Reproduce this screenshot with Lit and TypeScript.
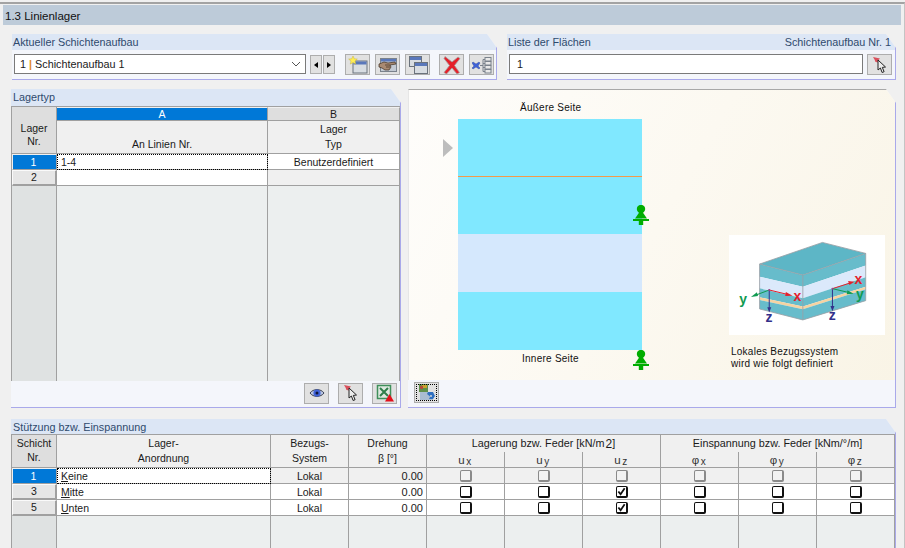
import { LitElement, html, css, svg } from "lit";
import { customElement } from "lit/decorators.js";

const winIcon = (x: number, y: number, w: number, h: number) => svg`
  <rect x="${x}" y="${y}" width="${w}" height="${h}" fill="#d8dde2" stroke="#6a727c" stroke-width="1"/>
  <rect x="${x + 0.5}" y="${y + 0.5}" width="${w - 1}" height="3" fill="#5a78bb"/>`;

const icons: Record<string, unknown> = {
  star: svg`<svg viewBox="0 0 20 18" width="20" height="18">${winIcon(5, 5, 14, 12)}
    <path d="M5 0l1.300 2.800 3 .3-2.300 2 .7 3L5 6.600 2.300 8.100l.7-3-2.300-2 3-.3z" fill="#ffee55" stroke="#c9b53a" stroke-width=".5"/></svg>`,
  hand: svg`<svg viewBox="0 0 20 18" width="20" height="18">
    <rect x="2.500" y="2.500" width="16" height="13" fill="#c3cad3" stroke="#7a828c"/>
    <rect x="3" y="3" width="15" height="2.500" fill="#5a78bb"/>
    <path d="M1 8l5-2 4 1 7-1 1 2-6 1 1 2-2 3-4 0-3-2-3-1z" fill="#a98a72" stroke="#3c2c20" stroke-width=".7"/>
    <path d="M7 9l5 0M8 11l4 0" stroke="#3c2c20" stroke-width=".7"/></svg>`,
  copy: svg`<svg viewBox="0 0 20 18" width="20" height="18">${winIcon(1.5, 0.5, 12, 10)}${winIcon(6.5, 6.5, 13, 11)}</svg>`,
  del: svg`<svg viewBox="0 0 20 18" width="20" height="18">
    <path d="M3 .5l7 5.500 6-5 2 1.500-5.500 7 5 7-2.500 1.500-5-6-5.500 6-2.500-1.500 5.500-7-5.500-7z" fill="#e5202a" stroke="#a8a0a0" stroke-width=".8"/></svg>`,
  tree: svg`<svg viewBox="0 0 20 18" width="20" height="18">
    <path d="M1 6l3 2 3-2 1 1-2 3 2 2-1 1-3-2-3 2-1-1 2-2-2-3z" fill="#3f62d8" stroke="#26408f" stroke-width=".4"/>
    <path d="M8 9.500h3M11 3.500v12M11 3.500h2M11 7.500h2M11 11.500h2M11 15.500h2" stroke="#7a828c" fill="none"/>
    <rect x="13" y="1.500" width="6" height="3.500" fill="#e8e8e8" stroke="#7a828c"/>
    <rect x="13" y="5.500" width="6" height="3.500" fill="#e8e8e8" stroke="#7a828c"/>
    <rect x="13" y="9.500" width="6" height="3.500" fill="#e8e8e8" stroke="#7a828c"/>
    <rect x="13" y="13.500" width="6" height="3.500" fill="#e8e8e8" stroke="#7a828c"/></svg>`,
  pick: svg`<svg viewBox="0 0 20 18" width="20" height="18">
    <path d="M3 1l7 1.500-2.500 2.500 1 1.500-3-.5-1-2.500z" fill="#d9505c"/>
    <path d="M8 4l0 10 2.400-2 1.700 4.500 2-.8-1.800-4.300 3.200-.4z" fill="#ececec" stroke="#222" stroke-width="1"/></svg>`,
  eye: svg`<svg viewBox="0 0 20 18" width="20" height="18">
    <path d="M3 9c3-4.500 11-4.500 14 0-3 4.500-11 4.500-14 0z" fill="#b8c4e0" stroke="#3a4156"/>
    <circle cx="10" cy="9" r="3.600" fill="#3f62d8"/><circle cx="10" cy="9" r="1.500" fill="#10163a"/></svg>`,
  excel: svg`<svg viewBox="0 0 20 18" width="20" height="18">
    <rect x="2.500" y="1.500" width="13" height="13" fill="#dfe9e0" stroke="#3f8f5a" stroke-width="1.500"/>
    <path d="M5 4l8 8M13 4l-8 8" stroke="#2f7f4a" stroke-width="2"/>
    <path d="M14.500 10l4.500 7.500h-9z" fill="#e3101c"/></svg>`,
  view: svg`<svg viewBox="0 0 20 18" width="20" height="18">
    <rect x="2" y="1" width="9" height="8" fill="#5f8f4a"/><rect x="5" y="2" width="5" height="3" fill="#c9a12e"/>
    <rect x="3" y="3" width="3" height="3" fill="#b34a3a"/>
    <rect x="3" y="9" width="13" height="8" fill="#a9bcd2"/>
    <path d="M11 9l5 0 2 4-2 3-4 0 1-2 2 0 0-2-2 0 0 1.500-3-2.500z" fill="#2f6fc0"/></svg>`,
};

const support = html`<svg viewBox="0 0 18 20" width="18" height="20">
  <circle cx="9" cy="4" r="4.200" fill="#00ad00"/>
  <path d="M7.500 7h3L15 13.500H3z" fill="#00ad00"/>
  <rect x="1" y="14" width="16" height="2" fill="#00ad00"/>
  <rect x="6.800" y="15" width="4.400" height="5" fill="#00ad00"/>
</svg>`;

const box = svg`<svg viewBox="326 135 469 300" width="156" height="100">
  <path d="M418 222L607 157L737 190L548 255Z" fill="#5db6c6"/>
  <path d="M418 222L548 255V290L418 260Z M548 255L737 190V226L548 290Z" fill="#67bccb"/>
  <path d="M418 260L548 290V325L418 295Z M548 290L737 226V262L548 325Z" fill="#dbe9fb"/>
  <path d="M418 295L548 325V350L418 322Z M548 325L737 262V290L548 350Z" fill="#67bccb"/>
  <path d="M418 322L548 350V358L418 330Z M548 350L737 290V298L548 358Z" fill="#f6d3a2"/>
  <path d="M418 330L548 358V390L418 357Z M548 358L737 298V332L548 390Z" fill="#67bccb"/>
  <path d="M418 222L607 157L737 190V332L548 390L418 357ZM418 222L548 255L737 190M548 255V390" fill="none" stroke="#9a9fa5" stroke-width="2.500"/>
  <path d="M447 300L505 314" stroke="#e3202c" stroke-width="3"/><path d="M517 317L497 306L495 318Z" fill="#e3202c"/>
  <path d="M447 300L405 316" stroke="#109a50" stroke-width="3"/><path d="M392 321L410 307L413 318Z" fill="#109a50"/>
  <path d="M447 300V355" stroke="#33308a" stroke-width="3"/><path d="M447 368L441 352H453Z" fill="#33308a"/>
  <path d="M637 296L690 279" stroke="#e3202c" stroke-width="3"/><path d="M703 275L684 273L688 285Z" fill="#e3202c"/>
  <path d="M637 296L688 308" stroke="#109a50" stroke-width="3"/><path d="M701 311L682 301L680 313Z" fill="#109a50"/>
  <path d="M637 296V350" stroke="#33308a" stroke-width="3"/><path d="M637 364L631 348H643Z" fill="#33308a"/>
  <circle cx="447" cy="300" r="3" fill="#a0408a"/><circle cx="637" cy="296" r="3" fill="#a0408a"/>
  <g font-family="Liberation Sans" font-weight="700" font-size="42">
    <text x="520" y="334" fill="#e3202c">x</text>
    <text x="703" y="283" fill="#e3202c">x</text>
    <text x="357" y="342" fill="#109a50">y</text>
    <text x="708" y="328" fill="#109a50">y</text>
    <text x="436" y="397" fill="#33308a">z</text>
    <text x="626" y="390" fill="#33308a">z</text>
  </g>
</svg>`;

@customElement("app-root")
export class AppRoot extends LitElement {
  static styles = css`
    :host {
      display: block;
      width: 905px;
      height: 548px;
      overflow: hidden;
      background: #f0f0f0;
      font-family: "Liberation Sans", Arial, sans-serif;
      font-size: 10.8px;
      color: #1a1a1a;
    }
    * { box-sizing: border-box; }
    .frame {
      margin-top: 2px;
      height: 546px;
      border-top: 2px solid #a3a3a3;
      border-right: 1px solid #c4c4c4;
      overflow: hidden;
    }
    .title {
      height: 20px;
      margin: 1px 3px 9px 3px;
      background: #bdcbd9;
      padding-left: 2px;
      font-size: 11.5px;
      line-height: 22px;
      color: #111;
    }
    .main { padding-left: 11px; display: flex; flex-direction: column; gap: 9px; }
    .row { display: flex; }
    .row1 { height: 46px; padding-left: 1px; gap: 10px; }
    .row2 { height: 319px; gap: 7px; }
    .group {
      display: flex;
      flex-direction: column;
      background: #f4f6fb;
      border-right: 1px solid #a9a9ea;
      border-bottom: 1px solid #a9a9ea;
      clip-path: polygon(0 0, calc(100% - 10px) 0, 100% 14px, 100% 100%, 0 100%);
    }
    .g-a { width: 485px; }
    .g-b { width: 389px; }
    .g-c { width: 390px; }
    .g-d { width: 488px; }
    .g-e { width: 885px; flex: none; height: 140px; margin-top: 2px; }
    .ghead {
      flex: none;
      height: 16px;
      background: #dce6f5;
      color: #2f4a6d;
      line-height: 17px;
      padding: 0 4px 0 1px;
      display: flex;
      justify-content: space-between;
    }
    .h17 { height: 17px; padding-left: 2px; }
    .h15 { height: 15px; line-height: 16px; padding-left: 2px; }
    .gbody { display: flex; align-items: flex-start; padding: 4px 2px 0; flex: 1; }
    .combo {
      width: 292px;
      height: 20px;
      background: #fff;
      border: 1px solid #7a7a7a;
      display: flex;
      align-items: center;
      padding-left: 5px;
      justify-content: space-between;
    }
    .pipe { color: #e08a2c; font-weight: 700; }
    .chev { margin-right: 4px; }
    .spin { display: flex; gap: 1px; margin: 1px 10px 0 4px; }
    .spin div {
      width: 12px;
      height: 19px;
      background: #e1e1e1;
      border: 1px solid #adadad;
      display: flex;
      align-items: center;
      justify-content: center;
    }
    .tri-l { width: 0; height: 0; border: 3px solid transparent; border-left: 0; border-right: 4px solid #000; }
    .tri-r { width: 0; height: 0; border: 3px solid transparent; border-right: 0; border-left: 4px solid #000; }
    .btn {
      flex: none;
      width: 25px;
      height: 21px;
      background: #e1e1e1;
      border: 1px solid #adadad;
      display: flex;
      align-items: center;
      justify-content: center;
    }
    .btns { display: flex; gap: 5px; }
    .gap9 { margin-left: 9px; }
    .input {
      width: 354px;
      height: 20px;
      background: #fff;
      border: 1px solid #7a7a7a;
      padding-left: 7px;
      line-height: 18px;
      margin-right: 4px;
    }
    .toolbar {
      flex: none;
      height: 26px;
      display: flex;
      align-items: center;
      gap: 9px;
      padding-bottom: 2px;
    }
    .tb-right { justify-content: flex-end; padding-right: 3px; }
    .tb-left { padding-left: 6px; }
    .focusbtn { outline: 1px dotted #000; outline-offset: -3px; }

    .t1, .t2 { display: grid; font-size: 10.5px; border-top: 1px solid #a0a0a0; border-left: 1px solid #a0a0a0; background: #ecefef; }
    .t1 {
      flex: 1;
      grid-template-columns: 45px 211px 132px;
      grid-template-rows: 14px 33px 16px 16px 1fr;
    }
    .t2 {
      flex: 1;
      grid-template-columns: 45px 214px repeat(8, 78px);
      grid-template-rows: 17px 16px 16px 16px 16px 1fr;
    }
    .c {
      border-right: 1px solid #a0a0a0;
      border-bottom: 1px solid #a0a0a0;
      display: flex;
      align-items: center;
      justify-content: center;
      min-width: 0;
      text-align: center;
      line-height: 15px;
    }
    .txt { padding-top: 1px; }
    .hd { background: #f0f0f0; }
    .nb { border-bottom: 0; }
    .corner { background: #dedede; }
    .corner-1 { grid-row: span 2; padding-top: 10px; line-height: 13px; }
    .corner-2 { grid-row: span 2; padding-bottom: 3px; line-height: 14px; }
    .span2 { grid-row: span 2; }
    .span3 { grid-column: span 3; font-size: 10.8px; }
    .colA { background: #0078d7; color: #fff; border-top: 1px solid #f0f0f0; }
    .colB { background: #dedede; border-top: 1px solid #f0f0f0; }
    .bottomtxt { align-items: flex-end; padding-bottom: 1px; }
    .rowsel { background: #0078d7; color: #fff; border: 1px solid #f0f0f0; border-right: 1px solid #a0a0a0; border-bottom: 1px solid #a0a0a0; padding-right: 2px; }
    .rowbtn {
      background: #e6e6e6;
      border-top: 1px solid #fafafa;
      border-left: 1px solid #fafafa;
      border-right: 2px solid #a0a0a0;
      border-bottom: 2px solid #a0a0a0;
    }
    .w { background: #fff; }
    .g { background: #f0f0f0; }
    .l { justify-content: flex-start; padding-left: 4px; }
    .r { justify-content: flex-end; padding-right: 3px; font-size: 11px; }
    .focus { background: #fff; outline: 1px dotted #000; outline-offset: -1px; }
    .rest { background: #ecefef; }
    .rest-corner { background: #dfe2e2; }
    .sub { font-size: 11.5px; letter-spacing: 1.5px; color: #333; padding-top: 2px; }
    .sub sub { font-size: 10px; vertical-align: -1px; line-height: 0; }
    .sup { font-size: 12px; vertical-align: 3px; line-height: 0; margin-left: 1px; }
    .cb {
      width: 12px;
      height: 12px;
      background: #fff;
      border: 1px solid #111;
      border-right-width: 2px;
      border-bottom-width: 2px;
      border-radius: 2px;
      display: flex;
      align-items: center;
      justify-content: center;
    }
    .cb.off { background: #f2f2f2; border: 1px solid #8a8a8a; border-right-width: 2px; border-bottom-width: 2px; }

    .canvas {
      flex: none;
      position: relative;
      height: 291px;
      border-top: 1px solid #a8a8a8;
      border-left: 1px solid #e6e6e6;
      background: linear-gradient(120deg, #fefdfb 0%, #fcf9f1 50%, #f9f4e6 100%);
      font-size: 10px;
      color: #111;
    }
    .sheet {
      position: absolute;
      left: 49px;
      top: 29px;
      width: 184px;
      height: 231px;
      display: flex;
      flex-direction: column;
      background: #80e8ff;
    }
    .s1 { height: 58px; border-bottom: 1px solid #f59a4a; }
    .s2 { height: 57px; }
    .s3 { height: 58px; background: #d5e8fd; }
    .cap { position: absolute; white-space: nowrap; line-height: 12px; letter-spacing: 0.25px; }
    .cap-top { left: 111px; top: 12px; }
    .cap-bot { left: 113px; top: 263px; }
    .arrow { position: absolute; left: 34px; top: 49px; width: 0; height: 0; border: 9px solid transparent; border-right: 0; border-left: 10px solid #bdbdbd; }
    .sup1 { position: absolute; left: 223px; top: 115px; line-height: 0; }
    .sup2 { position: absolute; left: 223px; top: 260px; line-height: 0; }
    .photo { position: absolute; left: 320px; top: 145px; width: 156px; height: 100px; background: #fff; line-height: 0; }
    .note { position: absolute; left: 322px; top: 256px; line-height: 12px; letter-spacing: 0.25px; white-space: nowrap; }
  `;

  private btn(name: string, cls = "") {
    return html`<div class="btn ${cls}">${icons[name]}</div>`;
  }

  private cb(state: "off" | "on" | "checked") {
    return html`<div class="cb ${state === "off" ? "off" : ""}">
      ${state === "checked"
        ? html`<svg viewBox="0 0 10 10" width="9" height="9"><path d="M1.500 5l2.500 3L8.500 1.500" fill="none" stroke="#111" stroke-width="2"/></svg>`
        : ""}
    </div>`;
  }

  private row(n: string, label: string, rest: string, cbs: Array<"off" | "on" | "checked">, first: boolean) {
    const bg = first ? "g" : "w";
    return html`
      <div class="c ${first ? "rowsel" : "rowbtn"}">${n}</div>
      <div class="c l txt ${first ? "focus" : "w"}"><u>${label[0]}</u>${label.slice(1)}</div>
      <div class="c txt ${bg}">Lokal</div>
      <div class="c r txt ${bg}">${rest}</div>
      ${cbs.map((s) => html`<div class="c ${bg}">${this.cb(s)}</div>`)}
    `;
  }

  render() {
    const subs = [["u", "x"], ["u", "y"], ["u", "z"], ["φ", "x"], ["φ", "y"], ["φ", "z"]];
    return html`
      <div class="frame">
        <div class="title">1.3 Linienlager</div>
        <div class="main">
          <div class="row row1">
            <section class="group g-a">
              <div class="ghead">Aktueller Schichtenaufbau</div>
              <div class="gbody">
                <div class="combo">
                  <span>1 <span class="pipe">|</span> Schichtenaufbau 1</span>
                  <svg class="chev" viewBox="0 0 10 6" width="10" height="6"><path d="M1 1l4 4 4-4" fill="none" stroke="#555" stroke-width="1"/></svg>
                </div>
                <div class="spin"><div><span class="tri-l"></span></div><div><span class="tri-r"></span></div></div>
                <div class="btns">${this.btn("star")}${this.btn("hand")}${this.btn("copy")}</div>
                <div class="btns gap9">${this.btn("del")}${this.btn("tree")}</div>
              </div>
            </section>
            <section class="group g-b">
              <div class="ghead"><span>Liste der Flächen</span><span>Schichtenaufbau Nr. 1</span></div>
              <div class="gbody">
                <div class="input">1</div>
                ${this.btn("pick")}
              </div>
            </section>
          </div>

          <div class="row row2">
            <section class="group g-c">
              <div class="ghead h17">Lagertyp</div>
              <div class="t1">
                <div class="c corner corner-1">Lager<br />Nr.</div>
                <div class="c colA">A</div>
                <div class="c colB">B</div>
                <div class="c hd bottomtxt">An Linien Nr.</div>
                <div class="c hd">Lager<br />Typ</div>
                <div class="c rowsel">1</div>
                <div class="c l txt focus">1-4</div>
                <div class="c txt w">Benutzerdefiniert</div>
                <div class="c rowbtn">2</div>
                <div class="c w"></div>
                <div class="c g"></div>
                <div class="c rest-corner nb"></div>
                <div class="c rest nb"></div>
                <div class="c rest nb"></div>
              </div>
              <div class="toolbar tb-right">${this.btn("eye")}${this.btn("pick")}${this.btn("excel")}</div>
            </section>
            <section class="group g-d">
              <div class="canvas">
                <div class="arrow"></div>
                <div class="cap cap-top">Äußere Seite</div>
                <div class="sheet">
                  <div class="s1"></div>
                  <div class="s2"></div>
                  <div class="s3"></div>
                </div>
                <div class="cap cap-bot">Innere Seite</div>
                <div class="sup1">${support}</div>
                <div class="sup2">${support}</div>
                <div class="photo">${box}</div>
                <div class="note">Lokales Bezugssystem<br />wird wie folgt definiert</div>
              </div>
              <div class="toolbar tb-left">${this.btn("view", "focusbtn")}</div>
            </section>
          </div>

          <section class="group g-e">
            <div class="ghead h15">Stützung bzw. Einspannung</div>
            <div class="t2">
              <div class="c corner corner-2">Schicht<br />Nr.</div>
              <div class="c hd span2">Lager-<br />Anordnung</div>
              <div class="c hd span2">Bezugs-<br />System</div>
              <div class="c hd span2">Drehung<br />β [°]</div>
              <div class="c hd nb span3">Lagerung bzw. Feder [kN/m<span class="sup">2</span>]</div>
              <div class="c hd nb span3">Einspannung bzw. Feder [kNm/°/m]</div>
              ${subs.map(([a, b]) => html`<div class="c hd"><span class="sub">${a}<sub>${b}</sub></span></div>`)}
              ${this.row("1", "Keine", "0.00", ["off", "off", "off", "off", "off", "off"], true)}
              ${this.row("3", "Mitte", "0.00", ["on", "on", "checked", "on", "on", "on"], false)}
              ${this.row("5", "Unten", "0.00", ["on", "on", "checked", "on", "on", "on"], false)}
              <div class="c rest-corner nb"></div>
              ${Array.from({ length: 9 }, () => html`<div class="c rest nb"></div>`)}
            </div>
          </section>
        </div>
      </div>
    `;
  }
}
